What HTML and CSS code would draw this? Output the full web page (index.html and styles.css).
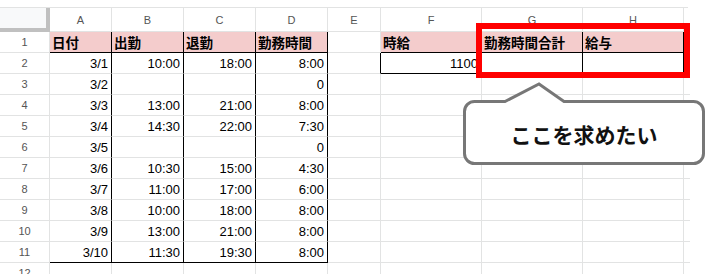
FILE: index.html
```html
<!DOCTYPE html>
<html lang="ja">
<head>
<meta charset="utf-8">
<title>Sheet</title>
<link rel="stylesheet" href="styles.css">
</head>
<body>
<div class="page">
  <div class="sheet">
    <div class="corner"></div>
    <div class="ch">A</div><div class="ch">B</div><div class="ch">C</div><div class="ch">D</div><div class="ch">E</div><div class="ch">F</div><div class="ch">G</div><div class="ch">H</div><div class="ch last"></div>

    <div class="rh">1</div>
    <div class="c hd bb br">日付</div><div class="c hd bb br">出勤</div><div class="c hd bb br">退勤</div><div class="c hd bb br">勤務時間</div><div class="c"></div><div class="c hd bb">時給</div><div class="c hd bb br">勤務時間合計</div><div class="c hd bb br">給与</div><div class="c last"></div>

    <div class="rh">2</div>
    <div class="c num br">3/1</div><div class="c num br">10:00</div><div class="c num br">18:00</div><div class="c num br">8:00</div><div class="c br"></div><div class="c num bb br">1100</div><div class="c bb br"></div><div class="c bb br"></div><div class="c last"></div>

    <div class="rh">3</div>
    <div class="c num br">3/2</div><div class="c num br"></div><div class="c num br"></div><div class="c num br">0</div><div class="c"></div><div class="c"></div><div class="c"></div><div class="c"></div><div class="c last"></div>

    <div class="rh">4</div>
    <div class="c num br">3/3</div><div class="c num br">13:00</div><div class="c num br">21:00</div><div class="c num br">8:00</div><div class="c"></div><div class="c"></div><div class="c"></div><div class="c"></div><div class="c last"></div>

    <div class="rh">5</div>
    <div class="c num br">3/4</div><div class="c num br">14:30</div><div class="c num br">22:00</div><div class="c num br">7:30</div><div class="c"></div><div class="c"></div><div class="c"></div><div class="c"></div><div class="c last"></div>

    <div class="rh">6</div>
    <div class="c num br">3/5</div><div class="c num br"></div><div class="c num br"></div><div class="c num br">0</div><div class="c"></div><div class="c"></div><div class="c"></div><div class="c"></div><div class="c last"></div>

    <div class="rh">7</div>
    <div class="c num br">3/6</div><div class="c num br">10:30</div><div class="c num br">15:00</div><div class="c num br">4:30</div><div class="c"></div><div class="c"></div><div class="c"></div><div class="c"></div><div class="c last"></div>

    <div class="rh">8</div>
    <div class="c num br">3/7</div><div class="c num br">11:00</div><div class="c num br">17:00</div><div class="c num br">6:00</div><div class="c"></div><div class="c"></div><div class="c"></div><div class="c"></div><div class="c last"></div>

    <div class="rh">9</div>
    <div class="c num br">3/8</div><div class="c num br">10:00</div><div class="c num br">18:00</div><div class="c num br">8:00</div><div class="c"></div><div class="c"></div><div class="c"></div><div class="c"></div><div class="c last"></div>

    <div class="rh">10</div>
    <div class="c num br">3/9</div><div class="c num br">13:00</div><div class="c num br">21:00</div><div class="c num br">8:00</div><div class="c"></div><div class="c"></div><div class="c"></div><div class="c"></div><div class="c last"></div>

    <div class="rh">11</div>
    <div class="c num br bb">3/10</div><div class="c num br bb">11:30</div><div class="c num br bb">19:30</div><div class="c num br bb">8:00</div><div class="c"></div><div class="c"></div><div class="c"></div><div class="c"></div><div class="c last"></div>

    <div class="rh">12</div>
    <div class="c"></div><div class="c"></div><div class="c"></div><div class="c"></div><div class="c"></div><div class="c"></div><div class="c"></div><div class="c"></div><div class="c last"></div>
  </div>

  <div class="highlight"></div>

  <div class="callout">
    <svg class="bubble" width="250" height="90" viewBox="0 0 250 90">
      <path d="M14.5 21.5 H45 L79 4 L104 21.5 H233.5 A10 10 0 0 1 243.5 31.5 V73.5 A10 10 0 0 1 233.5 83.5 H14.5 A10 10 0 0 1 4.5 73.5 V31.5 A10 10 0 0 1 14.5 21.5 Z" fill="#ffffff" stroke="#777777" stroke-width="3" stroke-linejoin="miter"/>
    </svg>
    <div class="callout-text">ここを求めたい</div>
  </div>
</div>
</body>
</html>
```

FILE: styles.css
```css
html, body {
  margin: 0;
  padding: 0;
  background: #ffffff;
}

.page {
  position: relative;
  width: 711px;
  height: 274px;
  overflow: hidden;
  font-family: "Liberation Sans", Arial, "Noto Sans CJK JP", sans-serif;
}

.sheet {
  margin-top: 7px;
  width: 688px;
  border-top: 1px solid #e2e3e3;
  display: grid;
  grid-template-columns: 50px 62px 72px 72px 72px 53px 101px 101px 101px 6px;
  grid-template-rows: 24px repeat(12, 21px);
}

.sheet > div {
  box-sizing: border-box;
  border-right: 1px solid #e2e3e3;
  border-bottom: 1px solid #e2e3e3;
  min-width: 0;
  overflow: hidden;
  white-space: nowrap;
}

.sheet > .last {
  border-right: none;
}

.corner {
  background: #f8f9fa;
  border-right: 4px solid #c0c0c0 !important;
  border-bottom: 4px solid #c0c0c0 !important;
}

.ch {
  display: flex;
  align-items: center;
  justify-content: center;
  font-size: 11px;
  color: #555555;
  padding-top: 1px;
}

.rh {
  display: flex;
  align-items: center;
  justify-content: center;
  font-size: 11px;
  color: #555555;
}

.c {
  display: flex;
  align-items: flex-end;
  padding: 0 3px 2px 3px;
  font-size: 13px;
  line-height: 15px;
  color: #000000;
}

.num {
  justify-content: flex-end;
}

.hd {
  background: #f4cccc;
  align-items: center;
  padding: 0 2px 0 2px;
  font-family: "Noto Sans CJK JP", sans-serif;
  font-weight: 700;
  font-size: 13.5px;
  line-height: 18px;
}

.sheet > .bb {
  border-bottom: 1px solid #000000;
}

.sheet > .br {
  border-right: 1px solid #000000;
}

.highlight {
  position: absolute;
  left: 476px;
  top: 23px;
  width: 214px;
  height: 55px;
  box-sizing: border-box;
  border: 6px solid #ff0000;
}

.callout {
  position: absolute;
  left: 460px;
  top: 80px;
  width: 250px;
  height: 90px;
}

.bubble {
  display: block;
}

.callout-text {
  position: absolute;
  left: 4px;
  top: 21px;
  width: 240px;
  height: 63px;
  display: flex;
  align-items: center;
  justify-content: center;
  font-family: "Noto Sans CJK JP", sans-serif;
  font-weight: 700;
  font-size: 21px;
  color: #111111;
  padding-top: 1px;
}
```
